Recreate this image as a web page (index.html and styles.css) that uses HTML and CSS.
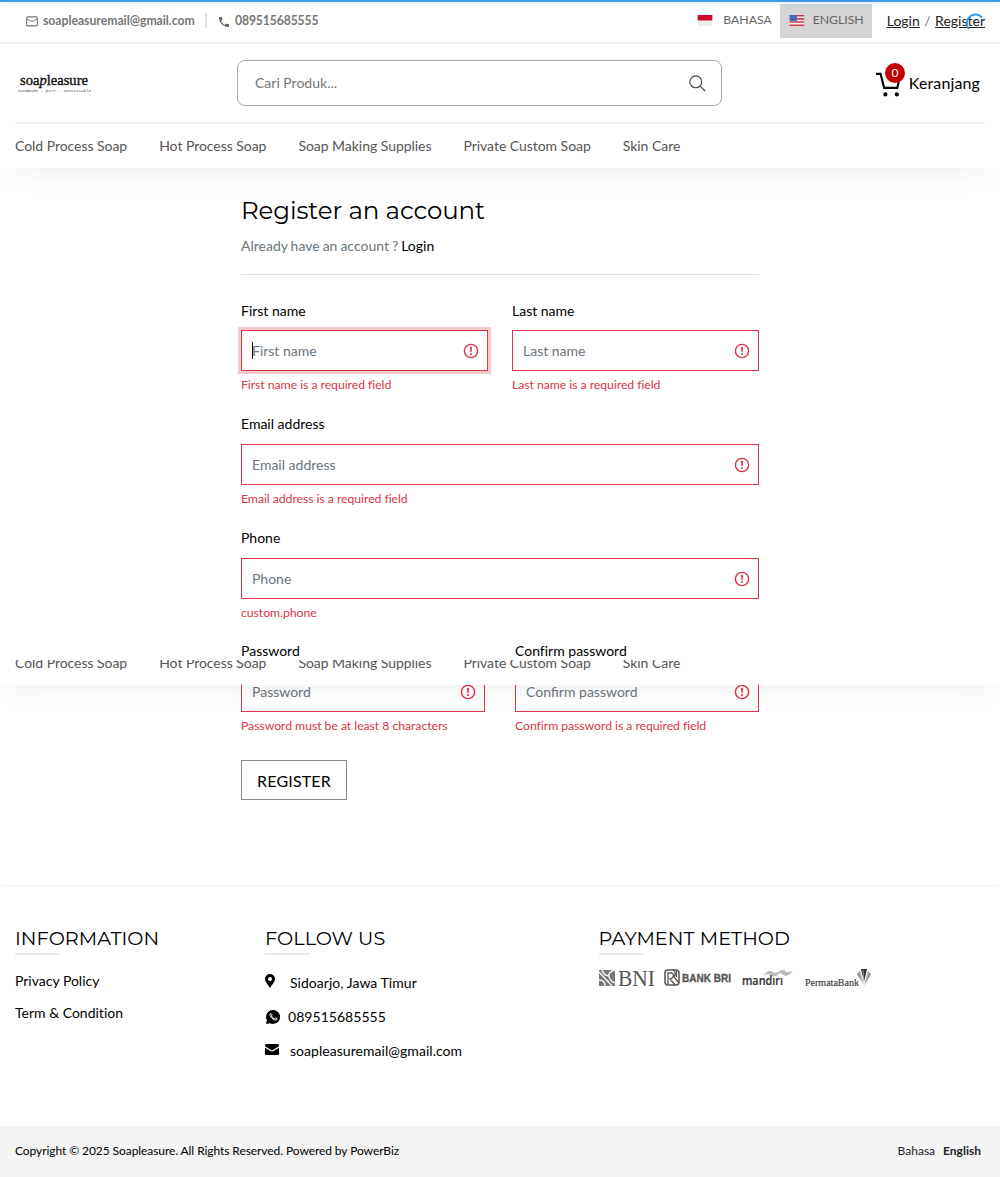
FILE: index.html
```html
<!DOCTYPE html>
<html lang="en">
<head>
<meta charset="utf-8">
<title>Register an account - Soapleasure</title>
<link rel="stylesheet" href="styles.css">
</head>
<body>
<svg class="defs" width="0" height="0">
  <symbol id="alert" viewBox="0 0 16 16"><circle cx="8" cy="8" r="6.6" fill="none" stroke="#dc3545" stroke-width="1.4"/><path d="M7 4h2L8.600 9H7.400z" fill="#dc3545"/><circle cx="8" cy="11" r="1" fill="#dc3545"/></symbol>
</svg>
<div class="progress"></div>
<svg class="spinner" viewBox="0 0 18 18"><path d="M2 15A8 8 0 0 1 15 3.5" fill="none" stroke="#3f9ae5" stroke-width="2"/></svg>

<header class="header">
  <div class="topbar">
    <div class="contact">
      <svg class="ic-mail" viewBox="0 0 12 11"><rect x=".6" y=".9" width="10.8" height="9" rx="1.2" fill="none" stroke="#777" stroke-width="1.1"/><path d="M1 3.2c2 0 2.5 2.1 5 2.1s3-2.1 5-2.1" fill="none" stroke="#777"/></svg>
      <span class="mail">soapleasuremail@gmail.com</span>
      <i class="sep"></i>
      <svg class="ic-phone" viewBox="0 0 18 18"><path d="M3.6 7.8c1.4 2.8 3.8 5.100 6.600 6.600l2.200-2.200c.3-.3.7-.4 1-.2 1.100.4 2.300.6 3.600.6.600 0 1 .4 1 1V17c0 .600-.4 1-1 1C7.600 18 0 10.400 0 1c0-.6.400-1 1-1h3.500c.600 0 1 .4 1 1 0 1.300.2 2.500.6 3.600.1.300 0 .7-.2 1z" fill="#666"/></svg>
      <span class="tel">089515685555</span>
    </div>
    <div class="account">
      <div class="lang"><svg class="flag" viewBox="0 0 16 12"><rect width="16" height="12" fill="#eee"/><rect width="16" height="6" fill="#ce0a2b"/></svg><span>BAHASA</span></div>
      <div class="lang active"><svg class="flag" viewBox="0 0 16 12"><rect width="16" height="12" fill="#f3eeee"/><path d="M0 .8h16M0 4.200h16M0 7.600h16M0 11.100h16" stroke="#d23c4b" stroke-width="1.7"/><rect width="8" height="6.500" fill="#4a66b5"/></svg><span>ENGLISH</span></div>
      <div class="auth"><a>Login</a><span>/</span><a>Register</a></div>
    </div>
  </div>
  <div class="brandbar">
    <svg class="logo" viewBox="0 0 80 24"><g font-family="Liberation Serif, serif" font-size="14" fill="#111" stroke="#111" stroke-width=".35"><text x="5" y="13.500" textLength="68" lengthAdjust="spacingAndGlyphs">soa<tspan font-style="italic">p</tspan>leasure</text></g><text x="3" y="20.500" font-family="Liberation Mono, monospace" font-size="3.800" fill="#444" textLength="73">handmade - pure - sustainable</text></svg>
    <div class="search"><span>Cari Produk...</span><svg viewBox="0 0 18 18"><circle cx="7.200" cy="7.200" r="6.300" fill="none" stroke="#444" stroke-width="1.200"/><path d="M11.800 11.800L17 17" stroke="#444" stroke-width="1.300"/></svg></div>
    <div class="cart">
      <svg viewBox="0 0 24 24"><path d="M0 1.800h4.400l3.400 13.400h12.600l2.300-9.500" fill="none" stroke="#000" stroke-width="2"/><circle cx="9" cy="21.500" r="2" /><circle cx="20" cy="21.500" r="2"/></svg>
      <b class="count">0</b>
      <span>Keranjang</span>
    </div>
  </div>
  <nav class="nav"><a>Cold Process Soap</a><a>Hot Process Soap</a><a>Soap Making Supplies</a><a>Private Custom Soap</a><a>Skin Care</a></nav>
</header>

<main class="main">
  <h1>Register an account</h1>
  <p class="have">Already have an account ? <a>Login</a></p>
  <form class="form">
    <div class="row first">
      <div class="field"><label>First name</label><div class="input focus"><i class="caret"></i><span>First name</span><svg><use href="#alert"/></svg></div><small>First name is a required field</small></div>
      <div class="field"><label>Last name</label><div class="input"><span>Last name</span><svg><use href="#alert"/></svg></div><small>Last name is a required field</small></div>
    </div>
    <div class="field"><label>Email address</label><div class="input"><span>Email address</span><svg><use href="#alert"/></svg></div><small>Email address is a required field</small></div>
    <div class="field phone"><label>Phone</label><div class="input"><span>Phone</span><svg><use href="#alert"/></svg></div><small>custom.phone</small></div>
    <div class="row wide">
      <div class="field"><label>Password</label><div class="input"><span>Password</span><svg><use href="#alert"/></svg></div><small>Password must be at least 8 characters</small></div>
      <div class="field"><label>Confirm password</label><div class="input"><span>Confirm password</span><svg><use href="#alert"/></svg></div><small>Confirm password is a required field</small></div>
    </div>
    <div class="button">REGISTER</div>
  </form>
</main>

<div class="sticky">
  <nav class="nav"><a>Cold Process Soap</a><a>Hot Process Soap</a><a>Soap Making Supplies</a><a>Private Custom Soap</a><a>Skin Care</a></nav>
</div>

<footer class="footer">
  <div class="columns">
    <section class="links">
      <h2>INFORMATION</h2>
      <a>Privacy Policy</a>
      <a>Term &amp; Condition</a>
    </section>
    <section class="follow">
      <h2>FOLLOW US</h2>
      <div><svg class="pin" viewBox="0 0 10 14"><path fill-rule="evenodd" d="M5 0a5 5 0 0 1 5 5c0 3-3.500 6-5 9C3.500 11 0 8 0 5a5 5 0 0 1 5-5zm0 3a2 2 0 1 0 0 4 2 2 0 0 0 0-4z"/></svg><span>Sidoarjo, Jawa Timur</span></div>
      <div class="wa"><svg viewBox="0 0 16 16"><path d="M1 15l.9-3.800A7 7 0 1 1 5 14.200z"/><path d="M5.500 4.200c-1 1.100-.5 3.200 1.500 5.100s4.400 2.300 5.300.9l-1.800-1.300-1.300.9C8 9.200 7 8.200 6.500 7l.7-1.100z" fill="none" stroke="#fff" stroke-width="1"/></svg><span>089515685555</span></div>
      <div><svg class="env" viewBox="0 0 14 11"><rect width="14" height="11" rx="1.300"/><path d="M0 2.800C4 5.500 5.500 7 7 7s3-1.500 7-4.200" fill="none" stroke="#fff" stroke-width="1.200"/></svg><span>soapleasuremail@gmail.com</span></div>
    </section>
    <section class="payment">
      <h2>PAYMENT METHOD</h2>
      <div class="banks">
        <svg width="56" height="18" viewBox="0 0 56 18"><path d="M0 1h16v16H0z" fill="#777"/><path d="M0 3l13 14M3 1c1 4 3 5 6 6M16 1c-5 1-7 4-6 7 1 3 3 5 6 6M0 11c4 0 6 2 6 6" stroke="#fff" stroke-width="1.300" fill="none"/><text x="19" y="16.500" font-family="Liberation Serif, serif" font-size="23" fill="#555" textLength="37" lengthAdjust="spacingAndGlyphs">BNI</text></svg>
        <svg width="68" height="18" viewBox="0 0 68 18"><rect x="1" y="1" width="14" height="15" rx="3" fill="none" stroke="#555" stroke-width="1.500"/><path d="M4 15V4h4q3 2 0 5l-2 1 5 6M9 1q4 3 1 7l5 6M12.500 2v6" fill="none" stroke="#555" stroke-width="1.300"/><text x="18" y="12.500" font-family="Liberation Sans, sans-serif" font-weight="bold" font-size="10.500" fill="#555" stroke="#555" stroke-width=".3" textLength="49" lengthAdjust="spacingAndGlyphs">BANK BRI</text></svg>
        <svg width="55" height="18" viewBox="0 0 55 18"><path d="M21 7l6-5q4-1 6 2 4 0 7-3 4-1 5 2 3 0 7-1-3 4-7 5-4-1-6-3-5 5-8 3-3-4-10 0z" fill="#bbb"/><text x="1" y="16" font-family="Open Sans, sans-serif" font-weight="600" font-size="12" fill="#333" stroke="#333" stroke-width=".2" textLength="41" lengthAdjust="spacingAndGlyphs">mandırı</text></svg>
        <svg width="68" height="18" viewBox="0 0 68 18"><text x="0" y="17" font-family="Liberation Serif, serif" font-size="10" fill="#444" stroke="#444" stroke-width=".2" textLength="54" lengthAdjust="spacingAndGlyphs">PermataBank</text><path d="M56 0h6l-3 13z" fill="#333"/><path d="M52 5l3-3 4 14zM63 2l3 3-7 12z" fill="#888"/><path d="M58 1l1 14M54 3l5 13M64 3l-5 13" stroke="#fff" stroke-width=".5"/></svg>
      </div>
    </section>
  </div>
  <div class="copyright"><span>Copyright © 2025 Soapleasure. All Rights Reserved. Powered by PowerBiz</span><div><span>Bahasa</span><b>English</b></div></div>
</footer>
</body>
</html>
```
FILE: styles.css
```css
* { box-sizing: border-box; }
body { margin: 0; width: 1000px; height: 1177px; position: relative; overflow: hidden; background: #fff; color: #000; font: 14px/21px Lato, sans-serif; display: flex; flex-direction: column; }
svg { display: block; overflow: visible; flex: none; }
.defs { position: absolute; }
h1, h2, p { margin: 0; font-weight: 400; }
.progress { position: absolute; top: 0; left: 0; width: 100%; height: 2px; background: #3f9ae5; z-index: 5; box-shadow: 0 0 5px #3f9ae566; }
.spinner { position: absolute; left: 967px; top: 14px; width: 18px; height: 18px; z-index: 5; }
.header { height: 168px; flex: none; background: #fff; box-shadow: 0 12px 26px -6px #0000000e; }
.topbar { height: 44px; border-bottom: 2px solid #f2f2f2; display: flex; justify-content: space-between; padding: 0 15px 0 26px; }
.contact { display: flex; align-items: center; padding-bottom: 1px; color: #777; font-weight: 700; font-size: 12.250px; }
.ic-mail { width: 12px; height: 11px; margin: 2px 5px 0 0; }
.mail { width: 152px; white-space: nowrap; letter-spacing: -.04px; }
.tel { letter-spacing: -.15px; }
.sep { width: 2px; height: 15px; background: #e4e4e4; margin: 0 12px 0 10px; }
.ic-phone { width: 10px; height: 10px; margin: 2px 6px 0 0; }
.account { display: flex; align-items: flex-start; }
.lang { margin-top: 4px; height: 34px; width: 92px; padding: 0 8px 3px 9px; display: flex; align-items: center; justify-content: space-between; font-size: 12.250px; color: #666; }
.lang.active { background: #d5d5d5; }
.flag { width: 16px; height: 11px; margin-top: 2px; }
.auth { margin: 10px 0 0 15px; display: flex; gap: 4.500px; color: #777; }
.auth a { color: #222; text-decoration: underline; }
.brandbar { height: 80px; margin: 0 15px; display: flex; align-items: center; border-bottom: 2px solid #f2f2f2; }
.logo { width: 80px; height: 24px; }
.search { margin-left: 142px; width: 485px; height: 46px; border: 1px solid #aaa; border-radius: 8px; display: flex; justify-content: space-between; align-items: center; padding: 0 15px 0 17px; color: #777; }
.search span { padding-bottom: 2px; }
.search svg { width: 17px; height: 17px; }
.cart { margin-left: auto; position: relative; display: flex; align-items: center; gap: 8px; font-size: 16px; padding-right: 5px; }
.cart span { padding-bottom: 2px; letter-spacing: .12px; }
.cart svg { width: 25px; height: 25px; margin-top: 2px; }
.count { position: absolute; left: 9px; top: -7px; width: 20px; height: 20px; border-radius: 50%; background: #c00000; color: #fff; font-size: 12px; font-weight: 400; line-height: 20px; text-align: center; }
.nav { display: flex; gap: 32px; padding: 0 15px 2px; height: 44px; align-items: center; color: #555; white-space: nowrap; letter-spacing: -.04px; }
.main { width: 518px; height: 718px; margin-left: 241px; flex: none; }
h1, h2 { font-family: Montserrat, Inter, sans-serif; }
h1 { margin-top: 25px; font-size: 24.500px; line-height: 34px; letter-spacing: -.1px; white-space: nowrap; }
.have { margin-top: 8px; padding-bottom: 18px; border-bottom: 1px solid #dfdfdf; color: #6c757d; word-spacing: -.6px; }
.have a { color: #000; }
.form { margin-top: 26px; }
.row { display: grid; grid-template-columns: 1fr 1fr; column-gap: 24px; }
.row.wide { column-gap: 30px; }
.field { height: 114px; display: flex; flex-direction: column; }
.field.phone { height: 113px; }
label { margin-top: -2px; height: 21px; font-variant-ligatures: none; }
.first label { margin-top: -1px; }
.first .input { margin-top: 9px; }
.input { position: relative; flex: none; height: 41px; margin-top: 10px; border: 1px solid #dc3545; display: flex; justify-content: space-between; align-items: center; padding: 0 8.500px 0 10px; color: #6c757d; }
.input svg { width: 16px; height: 16px; }
.focus { box-shadow: 0 0 0 3px #dc354544; }
.caret { position: absolute; left: 10px; top: 11px; width: 1px; height: 17px; background: #000; }
small { color: #dc3545; font-size: 12.250px; line-height: 18px; margin-top: 5px; letter-spacing: -.05px; }
.button { margin-top: 4px; width: 106px; height: 40px; border: 1px solid #888; display: flex; align-items: center; justify-content: center; font-size: 16px; letter-spacing: .15px; }
.sticky { position: absolute; top: 517px; left: 0; width: 1000px; height: 168px; background: #fff; box-shadow: 0 12px 26px -6px #0000000e; clip-path: inset(143px 0 -45px 0); display: flex; align-items: flex-end; }
.footer { flex: 1; margin-top: 1px; background: #fff; box-shadow: 0 0 4px #00000017; display: flex; flex-direction: column; }
.columns { flex: 1; padding: 38px 15px 0; display: grid; grid-template-columns: 250px 333.500px 1fr; }
h2 { font-size: 19.250px; line-height: 27px; height: 30px; white-space: nowrap; letter-spacing: .05px; }
h2::after { content: ""; display: block; width: 45px; height: 2px; margin-top: 1px; background: #ebebeb; }
.links { display: flex; flex-direction: column; gap: 11px; font-variant-ligatures: none; }
.links h2 { margin-bottom: 4px; }
.follow { display: flex; flex-direction: column; gap: 13px; }
.follow h2 { margin-bottom: 4px; }
.follow div { display: flex; height: 21px; }
.follow span { margin-left: auto; width: 308.500px; letter-spacing: .04px; }
.follow .wa span { width: 310.500px; }
.pin { width: 10px; height: 14px; margin-top: 2px; }
.wa svg { width: 16px; height: 16px; margin-top: 3px; }
.env { width: 14px; height: 11px; margin-top: 4px; }
.banks { display: flex; gap: 9px; margin-top: 14px; }
.copyright { height: 51px; background: #f4f4f4; padding: 0 19px 2px 15px; display: flex; align-items: center; justify-content: space-between; font-size: 12px; }
.copyright > span { letter-spacing: -.075px; }
.copyright div { display: flex; gap: 8px; color: #212529; }
```
